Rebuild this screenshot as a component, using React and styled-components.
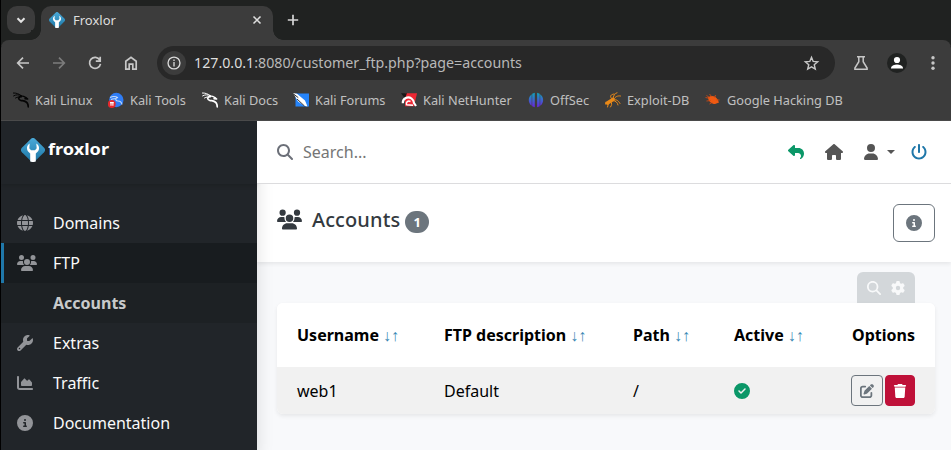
import React from "react";
import styled, { createGlobalStyle } from "styled-components";
import {
  FaGlobe, FaUsers, FaWrench, FaChartArea, FaCircleInfo, FaMagnifyingGlass, FaReply, FaHouse,
  FaUser, FaPowerOff, FaGear, FaCircleCheck, FaTrash, FaPenToSquare,
} from "react-icons/fa6";

const GlobalStyle = createGlobalStyle`
  * { box-sizing: border-box; }
  body { margin: 0; background: #000; font-family: "Noto Sans", sans-serif; overflow: hidden; }
  svg { display: block; flex: none; }
  button { font: inherit; padding: 0; margin: 0; cursor: pointer; }
`;

const Window = styled.div`
  display: flex;
  flex-direction: column;
  height: 450px;
  padding-left: 1px;
  background: #000;
`;

/* Browser chrome */
const TabStrip = styled.div`
  display: flex;
  height: 46px;
  margin-bottom: -6px;
  padding: 6px 0 0 6px;
  background: #202221;
`;
const TabSearch = styled.button`
  display: grid;
  place-items: center;
  width: 28px;
  height: 28px;
  border: 0;
  border-radius: 10px;
  background: #3c3c3c;
  color: #e3e3e3;
`;
const Tab = styled.div`
  position: relative;
  display: flex;
  align-items: center;
  width: 232px;
  height: 34px;
  margin-left: 6px;
  padding: 0 9px 6px 8px;
  border-radius: 10px 10px 0 0;
  background: #3c3c3c;
  color: #dedede;
  font-size: 13px;
  &::before, &::after {
    content: "";
    position: absolute;
    bottom: 0;
    width: 10px;
    height: 10px;
  }
  &::before { left: -10px; background: radial-gradient(circle at 0 0, #202221 9.5px, #3c3c3c 10px); }
  &::after { right: -10px; background: radial-gradient(circle at 100% 0, #202221 9.5px, #3c3c3c 10px); }
`;
const TabTitle = styled.span`
  flex: 1;
  margin-left: 8px;
`;
const NewTab = styled.button`
  display: grid;
  place-items: center;
  width: 28px;
  height: 28px;
  margin-left: 6px;
  border: 0;
  background: none;
  color: #d6d6d6;
`;
const Toolbar = styled.div`
  position: relative;
  display: flex;
  align-items: center;
  height: 46px;
  padding: 0 0 0 4px;
  border-radius: 8px 8px 0 0;
  background: #3c3c3c;
  color: #c7c7c7;
`;
const NavButton = styled.button`
  display: grid;
  place-items: center;
  flex: none;
  width: 36px;
  height: 34px;
  border: 0;
  background: none;
  color: ${(p) => (p.$dim ? "#7c7c7c" : "#c7c7c7")};
`;
const AddressBar = styled.div`
  display: flex;
  align-items: center;
  flex: none;
  width: 678px;
  height: 34px;
  margin: 0 8px;
  padding: 0 15px 0 5px;
  border-radius: 17px;
  background: #282828;
`;
const SiteInfo = styled.span`
  display: grid;
  place-items: center;
  width: 24px;
  height: 24px;
  border-radius: 50%;
  background: #3c3c3c;
  color: #dadada;
`;
const Url = styled.span`
  flex: 1;
  margin-left: 8px;
  padding-bottom: 1px;
  color: #b8b8b8;
  font-size: 14.22px;
  white-space: nowrap;
  b { color: #dedede; font-weight: 400; }
`;
const Avatar = styled.span`
  display: grid;
  place-items: center;
  width: 20px;
  height: 20px;
  border-radius: 50%;
  background: #202221;
`;
const Bookmarks = styled.div`
  display: flex;
  align-items: center;
  height: 35px;
  padding: 0 0 6px 12px;
  border-bottom: 1px solid #4a4a4a;
  background: #3c3c3c;
`;
const Bookmark = styled.div`
  display: flex;
  align-items: center;
  gap: 6px;
  width: ${(p) => p.$width}px;
  color: #c0c0c0;
  font-size: 12.75px;
  white-space: nowrap;
`;

/* Froxlor page */
const Page = styled.div`
  display: grid;
  grid-template-columns: 256px 1fr;
  height: 329px;
  background: #f8f9fb;
`;
const Sidebar = styled.aside`
  position: relative;
  z-index: 1;
  background: #212529;
  box-shadow: 0 8px 16px rgba(0, 0, 0, 0.13);
  clip-path: inset(0 -20px 0 0);
`;
const Brand = styled.div`
  display: flex;
  align-items: center;
  gap: 3px;
  height: 63px;
  padding: 0 0 6px 20px;
  box-shadow: 0 2px 4px rgba(0, 0, 0, 0.13);
  color: #fff;
`;
const Wordmark = styled.span`
  padding-bottom: 2px;
  font: 700 16.2px/24px "Noto Sans", sans-serif;
  transform: scaleX(1.12);
  transform-origin: left;
`;
const Menu = styled.nav`
  padding-top: 19px;
`;
const MenuItem = styled.a`
  display: flex;
  align-items: center;
  height: 40px;
  border-left: 3px solid ${(p) => (p.$active ? "#1f77a9" : "transparent")};
  padding-left: 13px;
  background: ${(p) => (p.$active ? "#181c1f" : "transparent")};
  color: #fafafa;
  font-size: 16px;
`;
const MenuIcon = styled.span`
  width: 36px;
  color: #929498;
`;
const SubItem = styled.a`
  display: flex;
  align-items: center;
  height: 40px;
  padding-left: 52px;
  background: #1d2124;
  color: #c8cacb;
  font-size: 16px;
  font-weight: 700;
`;
const Content = styled.main`
  display: flex;
  flex-direction: column;
`;
const TopBar = styled.header`
  position: relative;
  z-index: 2;
  display: flex;
  align-items: center;
  height: 63px;
  padding: 0 24px 0 20px;
  border-bottom: 1px solid #dcdcde;
  background: #fff;
  color: #555;
`;
const SearchField = styled.div`
  display: flex;
  align-items: center;
  gap: 10px;
  flex: 1;
  color: #6c7079;
  font-size: 16px;
  span { color: #757575; }
`;
const Actions = styled.div`
  display: flex;
  align-items: center;
`;
const Action = styled.span`
  display: flex;
  align-items: center;
  gap: 8px;
  margin-left: ${(p) => p.$gap || 0}px;
  color: ${(p) => p.$color || "#555"};
`;
const Caret = styled.span`
  border: 4px solid transparent;
  border-top-color: #555;
  border-bottom: 0;
`;
const TitleBar = styled.section`
  display: flex;
  align-items: center;
  height: 78px;
  padding: 0 16px 0 20px;
  background: #fff;
  box-shadow: 0 2px 4px rgba(0, 0, 0, 0.075);
  color: #343a40;
`;
const Title = styled.h1`
  flex: 1;
  display: flex;
  align-items: center;
  margin: 0 0 6px;
  font-size: 20px;
  font-weight: 500;
  line-height: 24px;
  svg { margin-bottom: 2px; }
`;
const TitleText = styled.span`
  margin: 0 5px 0 10px;
  letter-spacing: 0.1px;
`;
const Count = styled.span`
  display: grid;
  place-items: center;
  width: 24px;
  height: 22px;
  margin-top: 4px;
  border-radius: 11px;
  background: #6c757d;
  color: #fff;
  font-size: 13px;
  line-height: 20px;
  font-weight: 700;
`;
const InfoButton = styled.button`
  display: grid;
  place-items: center;
  width: 42px;
  height: 38px;
  border: 1px solid #6c757d;
  border-radius: 6px;
  background: #fff;
  color: #6c757d;
`;
const TableArea = styled.section`
  padding: 10px 16px 0 20px;
`;
const TableTools = styled.div`
  display: flex;
  align-items: center;
  justify-content: center;
  gap: 10px;
  width: 58px;
  height: 31px;
  margin: 0 20px 0 auto;
  border-radius: 6px 6px 0 0;
  background: #d3d7da;
  color: #f8f9fa;
`;
const Card = styled.div`
  overflow: hidden;
  border-radius: 6px;
  background: #fff;
  box-shadow: 0 2px 4px rgba(0, 0, 0, 0.075);
`;
const Row = styled.div`
  display: grid;
  grid-template-columns: 147px 189px 101px 1fr auto;
  align-items: center;
  height: ${(p) => (p.$head ? 64 : 47)}px;
  padding: 0 20px;
  background: ${(p) => (p.$head ? "#fff" : "#f1f1f1")};
  color: #000;
  font-size: 16px;
  font-weight: ${(p) => (p.$head ? 700 : 400)};
  white-space: nowrap;
`;
const Sort = styled.span`
  margin-left: 4px;
  color: #3a88b4;
  font: 400 16px "Liberation Serif", serif;
`;
const RowActions = styled.div`
  display: flex;
  gap: 2px;
`;
const RowButton = styled.button`
  display: grid;
  place-items: center;
  width: ${(p) => (p.$danger ? 30 : 32)}px;
  height: 31px;
  border: 1px solid ${(p) => (p.$danger ? "#bf1139" : "#6c757d")};
  border-radius: 4px;
  background: ${(p) => (p.$danger ? "#bf1139" : "transparent")};
  color: ${(p) => (p.$danger ? "#fff" : "#6c757d")};
`;

const FroxlorMark = ({ size, id }) => (
  <svg width={size} height={size} viewBox="0 0 24 24">
    <defs>
      <linearGradient id={id} x1="0" y1="0" x2="0" y2="1">
        <stop offset="0" stopColor="#4aa9d8" />
        <stop offset="1" stopColor="#1c76a5" />
      </linearGradient>
    </defs>
    <path fill={`url(#${id})`} d="M9.8 1a3.2 3.2 0 0 1 4.4 0l8.9 8.8a3.2 3.2 0 0 1 0 4.4l-8.9 8.9a3.2 3.2 0 0 1-4.4 0L.9 14.2a3.2 3.2 0 0 1 0-4.4z" />
    <path fill="#fff" d="M8.7 5.5C6.7 6.8 5.8 8.5 6 10.6c.1 2.1 1.3 3.5 3.2 4.8V23.6l2 .4h1.600l2-.4v-8.200c1.900-1.300 3.100-2.700 3.200-4.800.2-2.100-.7-3.800-2.700-5.100l.4 4.800-1.700 1.900h-4l-1.700-1.900z" />
  </svg>
);

const Dragon = ({ color }) => (
  <g fill="none" stroke={color} strokeLinecap="round" strokeLinejoin="round">
    <path strokeWidth="1" d="M.6 3.900C3 2.400 6 2.500 8.300 3.800M.4 1C3 .8 6 1.800 8.500 3.800M2.500 6c2-1.200 4-1.300 5.800-1" />
    <path strokeWidth="1.700" d="M8.300 4.300C5.300 4.600 4.800 7.600 7.700 8.300c3.300.7 6.200.3 7.200 4.200l.4 2.300" />
    <path strokeWidth="1.400" d="M8.500 4.200c2.300-.4 3.500.9 5 1.700l1.200 1.200-2.800-.4" />
  </g>
);

const BookmarkIcon = ({ kind }) => (
  <svg width="16" height="16" viewBox="0 0 16 16">
    {kind === "linux" && <Dragon color="#050505" />}
    {kind === "docs" && <Dragon color="#fff" />}
    {kind === "tools" && (
      <>
        <circle cx="8.3" cy="8" r="7.2" fill="#2f7df6" />
        <path d="M2 5.500c4-2 6-1 8 .2M3 7.500c2-1 4-.9 5.500-.5M9 5.500C6.500 7 8 9 10 9c2.500.1 3.600 1.500 4 3.500" fill="none" stroke="#c6dcfa" strokeWidth="1.1" />
        <circle cx="3.800" cy="12" r="3.900" fill="#e5282d" />
        <path d="M2 10.600h3.800M3 10.700v3M4.900 10.700v3" stroke="#fff" strokeWidth="1.1" />
      </>
    )}
    {kind === "forums" && (
      <>
        <path d="M2.500 1.500H16v13H2.500z" fill="#2584fa" />
        <path d="M0 1l4 .7 8 6.800 2.500 6-3.300-.7L5 9.500 2.500 5z" fill="#fff" />
        <path d="M.3 1.800l5 3.900M4 7l7.500 7" stroke="#222" strokeWidth=".9" fill="none" />
      </>
    )}
    {kind === "nethunter" && (
      <>
        <path d="M4 1.200h12l-3 13H4z" fill="#ed2733" />
        <path d="M0 1.200h6L4 6.500z" fill="#191919" />
        <path d="M1.800 11.300C1.500 6 7 3.800 10.500 6.500c1.500 1.200 2.500 3 2.500 4.500l2 3" fill="none" stroke="#fff" strokeWidth="2.2" />
        <path d="M5.500 13c-.8-3 1.500-4.700 4-3.500M5.500 12.800l6.500.4" fill="none" stroke="#fff" strokeWidth="1.5" />
      </>
    )}
    {kind === "offsec" && (
      <>
        <defs>
          <linearGradient id="offsec" gradientUnits="userSpaceOnUse" x1="0" y1="1" x2="0" y2="15">
            <stop offset="0" stopColor="#10a3ba" />
            <stop offset="1" stopColor="#6a24dc" />
          </linearGradient>
        </defs>
        <path fill="url(#offsec)" d="M3.700 2.200v11.600A7.200 7.200 0 0 1 3.700 2.200zM4.200 1.700L6.800.8v14.400l-2.600-.9zM9.100.8l2.600.9v12.600l-2.600.9zM12.200 2.200a7.200 7.200 0 0 1 0 11.600z" />
      </>
    )}
    {kind === "exploit" && (
      <g stroke="#e98918" fill="none" strokeLinecap="round">
        <path strokeWidth="3.6" d="M2.500 11l2.300-1.500L8 7.500" />
        <path strokeWidth="1" d="M7 7C4 4 6 2.500 9 2M8 7c0-3 2-6 4-6.300M8.500 7.500c2-3 4-4 7-3.500M9 8c3-.8 4.500 1 6 3.500M8 8.500c3 .5 4.500 2 5 4.500M6 10c1 1.500 1 3-.5 5M3.500 11.500L2.500 15M1 10L0 12.500" />
      </g>
    )}
    {kind === "hacking" && (
      <g>
        <path fill="#ef5a12" d="M3 5.500C6 2.800 10.500 3.800 12.500 7.300l1.500 3.200-4 1.500C6.500 12 3.500 9.500 3 5.500z" />
        <path d="M.5 5.500l4 .8M1.500 9L6 8.500M4.500 12l3-1.800M4.500 2L7 5M10.500 3l-1 3M11 8h3.500M1.500 3.500l3 2" stroke="#dd4b10" strokeWidth=".8" />
      </g>
    )}
  </svg>
);

const Stroke = ({ size = 18, width = 1.7, children }) => (
  <svg width={size} height={size} viewBox="0 0 18 18" fill="none" stroke="currentColor" strokeWidth={width}>
    {children}
  </svg>
);

const bookmarks = [
  ["linux", "Kali Linux", 95],
  ["tools", "Kali Tools", 94],
  ["docs", "Kali Docs", 91],
  ["forums", "Kali Forums", 108],
  ["nethunter", "Kali NetHunter", 127],
  ["offsec", "OffSec", 77],
  ["exploit", "Exploit-DB", 100],
  ["hacking", "Google Hacking DB", 140],
];

const Item = ({ icon: Icon, size = 16, active, children }) => (
  <MenuItem $active={active}>
    <MenuIcon><Icon size={size} /></MenuIcon>
    {children}
  </MenuItem>
);

const Heading = ({ children }) => (
  <span>{children}<Sort>↓↑</Sort></span>
);

export default function App() {
  return (
    <>
      <GlobalStyle />
      <Window>
        <TabStrip>
          <TabSearch><Stroke width={2}><path d="M5.500 7.300L9 10.800l3.500-3.500" /></Stroke></TabSearch>
          <Tab>
            <FroxlorMark size={16} id="mark-tab" />
            <TabTitle>Froxlor</TabTitle>
            <Stroke size={14} width={2}><path d="M4.500 4.500l9 9M13.500 4.500l-9 9" /></Stroke>
          </Tab>
          <NewTab><Stroke><path d="M9 3.800v10.400M3.800 9h10.400" /></Stroke></NewTab>
        </TabStrip>
        <Toolbar>
          <NavButton><Stroke><path d="M15 9H4M9 3.700L3.700 9 9 14.300" /></Stroke></NavButton>
          <NavButton $dim><Stroke><path d="M3 9h11M9 3.700L14.300 9 9 14.300" /></Stroke></NavButton>
          <NavButton><Stroke><path d="M13.800 6A5.500 5.500 0 1 0 14.500 9.800M14.200 2.800v4.400H9.800" /></Stroke></NavButton>
          <NavButton><Stroke><path d="M3.800 7.200L9 3.300l5.200 3.900v8h-3.400v-5H7.200v5H3.800z" /></Stroke></NavButton>
          <AddressBar>
            <SiteInfo><Stroke size={16} width={1.5}><circle cx="9" cy="9" r="6.7" /><path d="M9 8v4.800M9 5.200v1.600" /></Stroke></SiteInfo>
            <Url><b>127.0.0.1</b>:8080/customer_ftp.php?page=accounts</Url>
            <Stroke size={17} width={1.5}><path d="M9 2.500l1.800 4.300 4.700.4-3.600 3.100 1.100 4.600L9 12.500l-4 2.400 1.100-4.600-3.600-3.100 4.700-.4z" /></Stroke>
          </AddressBar>
          <NavButton><Stroke width={1.5}><path d="M5 2.700h8M6.800 2.700v5L2.900 14v1.300h12.200V14l-3.900-6.300v-5" /></Stroke></NavButton>
          <NavButton>
            <Avatar>
              <svg width="14" height="14" viewBox="0 0 14 14" fill="#fff"><circle cx="7" cy="4" r="3.1" /><path d="M1 12.600v-1.200C1.500 9.300 4.500 8.400 7 8.400s5.500.9 6 3v1.200z" /></svg>
            </Avatar>
          </NavButton>
          <NavButton><svg width="18" height="18" fill="currentColor"><circle cx="9" cy="3.7" r="1.7" /><circle cx="9" cy="9" r="1.7" /><circle cx="9" cy="14.3" r="1.7" /></svg></NavButton>
        </Toolbar>
        <Bookmarks>
          {bookmarks.map(([kind, label, width]) => (
            <Bookmark key={kind} $width={width}><BookmarkIcon kind={kind} />{label}</Bookmark>
          ))}
        </Bookmarks>
        <Page>
          <Sidebar>
            <Brand><FroxlorMark size={24} id="mark-brand" /><Wordmark>froxlor</Wordmark></Brand>
            <Menu>
              <Item icon={FaGlobe}>Domains</Item>
              <Item icon={FaUsers} size={20} active>FTP</Item>
              <SubItem>Accounts</SubItem>
              <Item icon={FaWrench}>Extras</Item>
              <Item icon={FaChartArea}>Traffic</Item>
              <Item icon={FaCircleInfo}>Documentation</Item>
            </Menu>
          </Sidebar>
          <Content>
            <TopBar>
              <SearchField><FaMagnifyingGlass size={16} /><span>Search...</span></SearchField>
              <Actions>
                <Action $color="#0b9768"><FaReply size={16} /></Action>
                <Action $gap={21}><FaHouse size={18} /></Action>
                <Action $gap={20}><FaUser size={16} /><Caret /></Action>
                <Action $gap={16} $color="#1f77a9"><FaPowerOff size={16} /></Action>
              </Actions>
            </TopBar>
            <TitleBar>
              <Title>
                <FaUsers size={25} />
                <TitleText>Accounts</TitleText>
                <Count>1</Count>
              </Title>
              <InfoButton><FaCircleInfo size={16} /></InfoButton>
            </TitleBar>
            <TableArea>
              <TableTools><FaMagnifyingGlass size={14} /><FaGear size={14} /></TableTools>
              <Card>
                <Row $head>
                  <Heading>Username</Heading>
                  <Heading>FTP description</Heading>
                  <Heading>Path</Heading>
                  <Heading>Active</Heading>
                  <span>Options</span>
                </Row>
                <Row>
                  <span>web1</span>
                  <span>Default</span>
                  <span>/</span>
                  <Action $color="#0b9768"><FaCircleCheck size={16} /></Action>
                  <RowActions>
                    <RowButton><FaPenToSquare size={14} /></RowButton>
                    <RowButton $danger><FaTrash size={14} /></RowButton>
                  </RowActions>
                </Row>
              </Card>
            </TableArea>
          </Content>
        </Page>
      </Window>
    </>
  );
}
